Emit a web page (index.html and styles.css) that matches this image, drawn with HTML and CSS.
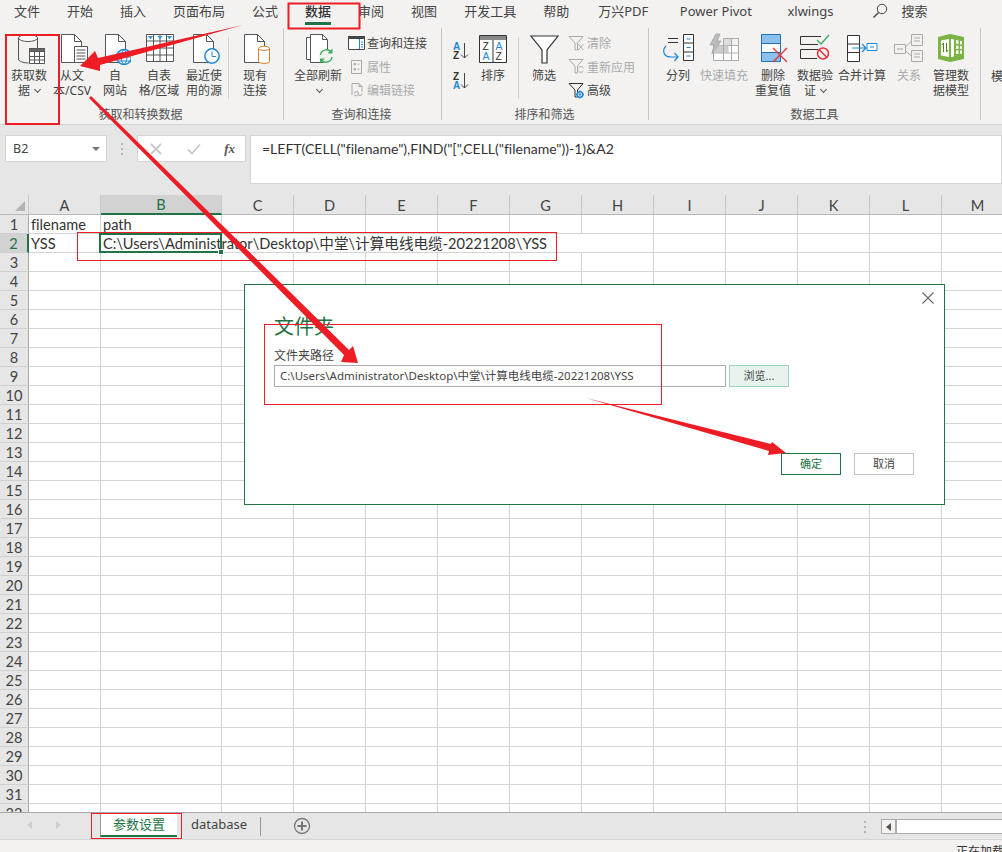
FILE: index.html
```html
<!DOCTYPE html>
<html lang="zh-CN">

<head>
  <meta charset="UTF-8">
  <title>Excel 文件夹</title>
  <link rel="stylesheet" href="styles.css">
</head>

<body>
  <nav class="tabs">
    <span>文件</span><span>开始</span><span>插入</span><span>页面布局</span><span>公式</span>
    <span class="tab-on">数据</span><span>审阅</span><span>视图</span><span>开发工具</span><span>帮助</span><span class="tab-wx">万兴PDF</span>
    <span class="tab-pp">Power Pivot</span><span class="tab-xl">xlwings</span>
    <span class="tab-search">
      <svg width="16" height="16" viewBox="0 0 16 16" fill="none" stroke="#444"><circle cx="10" cy="6" r="4.7"/><path d="M6.6 9.4 1.5 14.5" stroke-width="1.4"/></svg>
      搜索
    </span>
  </nav>

  <section class="ribbon">
    <div class="group g1">
      <div class="group-body">
        <div class="big w46">
          <svg width="32" height="32" viewBox="0 0 32 32" fill="none" stroke="#555"><ellipse cx="15" cy="5" rx="9.5" ry="3.5" fill="#fff"/><path d="M5.5 5v22c2 2 6 3 10 3M24.5 5v10"/><path fill="#fff" d="M16.5 15.5h15v15h-15z"/><path fill="#666" d="M16.5 15.5h15v3h-15z"/><path d="M21.5 18v12M26.5 18v12M17 23.5h14M17 27h14"/></svg>
          <span>获取数<br>据 <i class="chev"></i></span>
        </div>
        <div class="big w40">
          <svg width="32" height="32" viewBox="0 0 32 32" fill="none" stroke="#555"><path fill="#fff" d="M5.5 1.5h13l7 7v21h-20z"/><path d="M18.5 1.5v7h7"/><path fill="#fff" d="M18.5 13.5h13v16h-13z"/><path d="M20.5 17h9M20.5 20h9M20.5 23h9M20.5 26h9"/></svg>
          <span>从文<br>本/CSV</span>
        </div>
        <div class="big w46">
          <svg width="32" height="32" viewBox="0 0 32 32" fill="none" stroke="#555"><path fill="#fff" d="M6.5 1.5h13l7 7v21h-20z"/><path d="M19.5 1.5v7h7"/><circle cx="25" cy="24" r="7.5" fill="#fff" stroke="#1f87d6" stroke-width="1.5"/><path d="M17.5 24h15M25 16.5c-4 4-4 11 0 15M25 16.5c4 4 4 11 0 15M19 20h12M19 28h12" stroke="#1f87d6"/></svg>
          <span>自<br>网站</span>
        </div>
        <div class="big w42">
          <svg width="32" height="32" viewBox="0 0 32 32" fill="none" stroke="#555"><path fill="#fff" d="M3.5 1.5h27v27h-27z"/><path d="M3.5 8h27M3.5 15h27M3.5 22h27M10.5 1.5v27M17 1.5v27M23.5 1.5v27"/><path fill="#2f9ae0" stroke="none" d="M5 3h5l-2.5 3.5zM14.5 3h5L17 6.5zM24 3h5l-2.5 3.5z"/></svg>
          <span>自表<br>格/区域</span>
        </div>
        <div class="big w48">
          <svg width="32" height="32" viewBox="0 0 32 32" fill="none" stroke="#555"><path fill="#fff" d="M5.5 1.5h13l7 7v21h-20z"/><path d="M18.5 1.5v7h7"/><circle cx="24" cy="23" r="7.2" fill="#fff" stroke="#1f87d6" stroke-width="1.5"/><path d="M24 18.5V23.5H28" stroke="#1f87d6"/></svg>
          <span>最近使<br>用的源</span>
        </div>
        <i class="vsep"></i>
        <div class="big w50">
          <svg width="32" height="32" viewBox="0 0 32 32" fill="none" stroke="#555"><path fill="#fff" d="M5.5 1.5h13l7 7v21h-20z"/><path d="M18.5 1.5v7h7"/><path fill="#fff" stroke="#d9802e" d="M19.5 15.5c0-3 11-3 11 0v13c0 2.5-11 2.5-11 0z"/><path stroke="#d9802e" d="M19.5 15.5c0 2.5 11 2.5 11 0"/></svg>
          <span>现有<br>连接</span>
        </div>
      </div>
      <label>获取和转换数据</label>
    </div>

    <div class="group g2">
      <div class="group-body">
        <div class="big w48">
          <svg width="32" height="32" viewBox="0 0 32 32" fill="none" stroke="#555"><path fill="#fff" d="M4.5 4.5h11v22h-11z"/><path fill="#fff" d="M8.5 1.5h12l5 5v23h-17z"/><path d="M20.5 1.5v5h5"/><circle cx="24" cy="23" r="7" fill="#f3f2f1" stroke="none"/><path d="M18.5 22a6 6 0 0 1 10.5-3M30 24a6 6 0 0 1-10.5 3" stroke="#3dae5e" stroke-width="1.5"/><path fill="#3dae5e" stroke="none" d="M30.5 15.5v5h-5zM18 30.5v-5h5z"/></svg>
          <span>全部刷新<br><i class="chev"></i></span>
        </div>
        <div class="smalls">
          <div class="small">
            <svg width="17" height="14" viewBox="0 0 17 14" fill="none" stroke="#444"><path fill="#fff" d="M.5.5h16v13H.5z"/><path fill="#444" d="M.5.5h16v2H.5z"/><path fill="#cfe4f5" stroke="#1f87d6" d="M11.5 3v10"/><path stroke="#1f87d6" d="M13 6h2M13 8.5h2M13 11h2"/></svg>
            查询和连接
          </div>
          <div class="small off">
            <svg width="17" height="16" viewBox="0 0 17 16" fill="none" stroke="#aaa"><path d="M3.5 1.5h10v13h-10z"/><path d="M6 4.5h1.5V6H6zM6 9.5h1.5V11H6zM9.5 5.2h2M9.5 10.2h2"/></svg>
            属性
          </div>
          <div class="small off">
            <svg width="17" height="16" viewBox="0 0 17 16" fill="none" stroke="#aaa"><path d="M4 13V1.5h7l3 3v5M11 1.5v3h3"/><path d="M6.5 11.5a2 2 0 0 1 4 0c0 2-3 3-4.5 1.5M14 11.5a2 2 0 0 1-4 0"/></svg>
            编辑链接
          </div>
        </div>
      </div>
      <label>查询和连接</label>
    </div>

    <div class="group g3">
      <div class="group-body">
        <div class="sort-pair">
          <svg width="22" height="22" viewBox="0 0 22 22" fill="none" stroke="#444"><text x="2" y="9" class="az blue">A</text><text x="2" y="18" class="az dark">Z</text><path d="M13.5 2v15M10 13.5l3.5 3.5 3.5-3.5"/></svg>
          <svg width="22" height="22" viewBox="0 0 22 22" fill="none" stroke="#444"><text x="2" y="9" class="az dark">Z</text><text x="2" y="18" class="az blue">A</text><path d="M13.5 2v15M10 13.5l3.5 3.5 3.5-3.5"/></svg>
        </div>
        <div class="big w44 sort-big">
          <svg width="32" height="32" viewBox="0 0 32 32" fill="none" stroke="#333"><path fill="#fff" d="M2.5 2.5h27v27h-27z"/><path fill="#888" stroke="none" d="M3 3h26v4H3z"/><path d="M16 7v22"/><text x="5.5" y="17" class="azb dark">Z</text><text x="5.5" y="27" class="azb blue">A</text><text x="18.5" y="17" class="azb blue">A</text><text x="18.5" y="27" class="azb dark">Z</text></svg>
          <span>排序</span>
        </div>
        <i class="vsep vsep-sort"></i>
        <div class="big w44">
          <svg width="32" height="32" viewBox="0 0 32 32" fill="none" stroke="#333" stroke-width="1.2"><path fill="#fff" d="M3 3h27L19 17v13h-5V17z"/></svg>
          <span>筛选</span>
        </div>
        <div class="smalls smalls-filter">
          <div class="small off">
            <svg width="17" height="17" viewBox="0 0 17 17" fill="none" stroke="#aaa"><path d="M1 1.5h14L9.5 8v7H7V8z"/><path d="M10 9l5.5 6M15.5 9 10 15"/></svg>
            清除
          </div>
          <div class="small off">
            <svg width="17" height="17" viewBox="0 0 17 17" fill="none" stroke="#aaa"><path d="M1 1.5h14L9.5 8v7H7V8z"/><path d="M10.5 10a3 3 0 0 1 5 0M15.5 13a3 3 0 0 1-5 0"/></svg>
            重新应用
          </div>
          <div class="small">
            <svg width="17" height="17" viewBox="0 0 17 17" fill="none" stroke="#333"><path d="M1 1.5h14L9.5 8v7H7V8z"/><circle cx="12" cy="12.5" r="2.8" stroke="#1f87d6" stroke-width="1.5"/><circle cx="12" cy="12.5" r=".8" fill="#1f87d6" stroke="#1f87d6"/><path d="M12 8.5v1.2M12 15.3v1.2M8 12.5h1.2M14.8 12.5H16" stroke="#1f87d6" stroke-width="1.3"/></svg>
            高级
          </div>
        </div>
      </div>
      <label>排序和筛选</label>
    </div>

    <div class="group g4">
      <div class="group-body">
        <div class="big w38">
          <svg width="32" height="30" viewBox="0 0 32 30" fill="none" stroke="#333"><path d="M6 5.5h10M6 9.5h10"/><path fill="#fff" d="M21.5 1.5h10v26h-10z"/><path d="M21.5 10h10M21.5 19h10"/><path d="M24.5 6h4M24.5 14.5h4M24.5 23h4" stroke="#1f87d6"/><path d="M4 13c-4 4-3 11 5 11h7M12.5 20l3.5 4-3.5 4" stroke="#1f87d6" stroke-width="1.2"/></svg>
          <span>分列</span>
        </div>
        <div class="big w54 off">
          <svg width="32" height="30" viewBox="0 0 32 30" fill="none" stroke="#aaa"><path fill="#fff" d="M5.5 12.5h25v15h-25z"/><path fill="#ddd" d="M15.5 5.5h8v7h-8z"/><path fill="#ccc" stroke="none" d="M5.5 12.5h15v7h-15z"/><path d="M5.5 20h25M15.5 12.5v15M23.5 5.5v22M23.5 5.5h7v7"/><path fill="#bbb" d="M8 1l-6 11h4l-2 9 9-13H9l3-7z"/></svg>
          <span>快速填充</span>
        </div>
        <div class="big w44">
          <svg width="32" height="30" viewBox="0 0 32 30" fill="none" stroke="#1f6fb5"><path fill="#8bc1ec" d="M4.5 1.5h19v9h-19z"/><path fill="#fff" d="M4.5 10.5h19v9h-19z"/><path fill="#8bc1ec" d="M4.5 19.5h19v9h-19z"/><path stroke="#e8313a" stroke-width="1.4" d="M16 15l14 14M30 15 16 29"/></svg>
          <span>删除<br>重复值</span>
        </div>
        <div class="big w40">
          <svg width="32" height="30" viewBox="0 0 32 30" fill="none" stroke="#333"><path d="M22 3.5H1.5v8H19M19 16.5H1.5v9H18"/><path stroke="#3dae5e" stroke-width="1.3" d="M18 7l4 4 8-9"/><circle cx="24" cy="20.5" r="5.5" stroke="#e8313a" stroke-width="1.5"/><path stroke="#e8313a" stroke-width="1.5" d="M20 16.5l8 8"/></svg>
          <span>数据验<br>证 <i class="chev"></i></span>
        </div>
        <div class="big w54">
          <svg width="32" height="30" viewBox="0 0 32 30" fill="none" stroke="#333"><path fill="#fff" d="M1.5 2.5h12v26h-12z"/><path d="M1.5 11h12M1.5 19.5h12"/><path stroke="#1f87d6" stroke-width="1.2" d="M6 15h14M16 11l4 4-4 4"/><path stroke="#1f87d6" fill="#fff" d="M21 10.5h10v7H21z"/><path stroke="#1f87d6" d="M24 14h4"/></svg>
          <span>合并计算</span>
        </div>
        <div class="big w40 off">
          <svg width="32" height="30" viewBox="0 0 32 30" fill="none" stroke="#aaa"><path d="M1.5 11.5h11v9h-11zM18.5 1.5h11v11h-11zM18.5 17.5h11v11h-11z"/><path d="M12.5 14l6-6M12.5 18l6 5M4 16h6M21 5h6M21 8h6M21 21h6M21 24h6"/></svg>
          <span>关系</span>
        </div>
        <div class="big w44">
          <svg width="32" height="30" viewBox="0 0 32 30"><path fill="#7cb342" d="M3 4 15 1l14 3v22l-14 3-12-3z"/><path fill="#fff" d="M6 7.5 14 6v18l-8-1.5zM16 6l3 .5v17l-3 .5zM21 7l2.5.5V11l-2.5-.2zM25 7.8l2 .4v3.2l-2-.2zM21 12.5l2.5.2V16H21zM25 13l2 .2V16h-2zM21 17.5h2.5v3.3l-2.5.2zM25 17.5h2v3l-2 .3z"/><path fill="none" stroke="#4d8a1f" d="M8.5 19v-9L7 12M11.5 10v9l1.5-2"/></svg>
          <span>管理数<br>据模型</span>
        </div>
      </div>
      <label>数据工具</label>
    </div>

    <div class="group g5">
      <div class="next">模拟分析</div>
    </div>
  </section>

  <section class="formula">
    <div class="namebox">B2<i class="down"></i></div>
    <i class="grip"></i>
    <div class="fx-btns">
      <svg width="16" height="14" viewBox="0 0 16 14" fill="none" stroke="#c8c8c8" stroke-width="1.8"><path d="M3 2l10 10M13 2 3 12"/></svg>
      <svg width="16" height="14" viewBox="0 0 16 14" fill="none" stroke="#c8c8c8" stroke-width="1.8"><path d="M2 7.5l4 4 8-9"/></svg>
      <em>fx</em>
    </div>
    <div class="fx-input">=LEFT(CELL("filename"),FIND("[",CELL("filename"))-1)&amp;A2</div>
  </section>

  <main class="sheet">
    <table>
      <colgroup><col class="c-rh"><col class="c-a"><col class="c-b"><col span="11" class="c-n"></colgroup>
      <thead>
        <tr><th class="corner"><i></i></th><th>A</th><th class="cur-col">B</th><th>C</th><th>D</th><th>E</th><th>F</th><th>G</th><th>H</th><th>I</th><th>J</th><th>K</th><th>L</th><th>M</th></tr>
      </thead>
      <tbody>
        <tr><th>1</th><td>filename</td><td>path</td><td></td><td></td><td></td><td></td><td></td><td></td><td></td><td></td><td></td><td></td><td></td></tr>
        <tr><th class="cur-row">2</th><td>YSS</td><td colspan="6" class="long"><b class="sel"><i></i></b>C:\Users\Administrator\Desktop\中堂\计算电线电缆-20221208\YSS</td><td></td><td></td><td></td><td></td><td></td><td></td></tr>
        <tr><th>3</th><td></td><td></td><td></td><td></td><td></td><td></td><td></td><td></td><td></td><td></td><td></td><td></td><td></td></tr>
        <tr><th>4</th><td></td><td></td><td></td><td></td><td></td><td></td><td></td><td></td><td></td><td></td><td></td><td></td><td></td></tr>
        <tr><th>5</th><td></td><td></td><td></td><td></td><td></td><td></td><td></td><td></td><td></td><td></td><td></td><td></td><td></td></tr>
        <tr><th>6</th><td></td><td></td><td></td><td></td><td></td><td></td><td></td><td></td><td></td><td></td><td></td><td></td><td></td></tr>
        <tr><th>7</th><td></td><td></td><td></td><td></td><td></td><td></td><td></td><td></td><td></td><td></td><td></td><td></td><td></td></tr>
        <tr><th>8</th><td></td><td></td><td></td><td></td><td></td><td></td><td></td><td></td><td></td><td></td><td></td><td></td><td></td></tr>
        <tr><th>9</th><td></td><td></td><td></td><td></td><td></td><td></td><td></td><td></td><td></td><td></td><td></td><td></td><td></td></tr>
        <tr><th>10</th><td></td><td></td><td></td><td></td><td></td><td></td><td></td><td></td><td></td><td></td><td></td><td></td><td></td></tr>
        <tr><th>11</th><td></td><td></td><td></td><td></td><td></td><td></td><td></td><td></td><td></td><td></td><td></td><td></td><td></td></tr>
        <tr><th>12</th><td></td><td></td><td></td><td></td><td></td><td></td><td></td><td></td><td></td><td></td><td></td><td></td><td></td></tr>
        <tr><th>13</th><td></td><td></td><td></td><td></td><td></td><td></td><td></td><td></td><td></td><td></td><td></td><td></td><td></td></tr>
        <tr><th>14</th><td></td><td></td><td></td><td></td><td></td><td></td><td></td><td></td><td></td><td></td><td></td><td></td><td></td></tr>
        <tr><th>15</th><td></td><td></td><td></td><td></td><td></td><td></td><td></td><td></td><td></td><td></td><td></td><td></td><td></td></tr>
        <tr><th>16</th><td></td><td></td><td></td><td></td><td></td><td></td><td></td><td></td><td></td><td></td><td></td><td></td><td></td></tr>
        <tr><th>17</th><td></td><td></td><td></td><td></td><td></td><td></td><td></td><td></td><td></td><td></td><td></td><td></td><td></td></tr>
        <tr><th>18</th><td></td><td></td><td></td><td></td><td></td><td></td><td></td><td></td><td></td><td></td><td></td><td></td><td></td></tr>
        <tr><th>19</th><td></td><td></td><td></td><td></td><td></td><td></td><td></td><td></td><td></td><td></td><td></td><td></td><td></td></tr>
        <tr><th>20</th><td></td><td></td><td></td><td></td><td></td><td></td><td></td><td></td><td></td><td></td><td></td><td></td><td></td></tr>
        <tr><th>21</th><td></td><td></td><td></td><td></td><td></td><td></td><td></td><td></td><td></td><td></td><td></td><td></td><td></td></tr>
        <tr><th>22</th><td></td><td></td><td></td><td></td><td></td><td></td><td></td><td></td><td></td><td></td><td></td><td></td><td></td></tr>
        <tr><th>23</th><td></td><td></td><td></td><td></td><td></td><td></td><td></td><td></td><td></td><td></td><td></td><td></td><td></td></tr>
        <tr><th>24</th><td></td><td></td><td></td><td></td><td></td><td></td><td></td><td></td><td></td><td></td><td></td><td></td><td></td></tr>
        <tr><th>25</th><td></td><td></td><td></td><td></td><td></td><td></td><td></td><td></td><td></td><td></td><td></td><td></td><td></td></tr>
        <tr><th>26</th><td></td><td></td><td></td><td></td><td></td><td></td><td></td><td></td><td></td><td></td><td></td><td></td><td></td></tr>
        <tr><th>27</th><td></td><td></td><td></td><td></td><td></td><td></td><td></td><td></td><td></td><td></td><td></td><td></td><td></td></tr>
        <tr><th>28</th><td></td><td></td><td></td><td></td><td></td><td></td><td></td><td></td><td></td><td></td><td></td><td></td><td></td></tr>
        <tr><th>29</th><td></td><td></td><td></td><td></td><td></td><td></td><td></td><td></td><td></td><td></td><td></td><td></td><td></td></tr>
        <tr><th>30</th><td></td><td></td><td></td><td></td><td></td><td></td><td></td><td></td><td></td><td></td><td></td><td></td><td></td></tr>
        <tr><th>31</th><td></td><td></td><td></td><td></td><td></td><td></td><td></td><td></td><td></td><td></td><td></td><td></td><td></td></tr>
        <tr><th>32</th><td></td><td></td><td></td><td></td><td></td><td></td><td></td><td></td><td></td><td></td><td></td><td></td><td></td></tr>
      </tbody>
    </table>
  </main>

  <footer class="sheetbar">
    <i class="nav nav-l"></i>
    <i class="nav nav-r"></i>
    <div class="sheet-tab">参数设置</div>
    <div class="sheet-other">database</div>
    <i class="tab-sep"></i>
    <svg class="add" width="18" height="18" viewBox="0 0 18 18" fill="none" stroke="#777"><circle cx="9" cy="9" r="7.5" stroke-width="1.3"/><path d="M9 4.5v9M4.5 9h9" stroke-width="2"/></svg>
    <i class="grip grip-h"></i>
    <div class="hscroll"><span><i></i></span></div>
  </footer>

  <div class="status">
    <svg width="15" height="12" viewBox="0 0 15 12" fill="none" stroke="#555"><path d="M.5 12V.5h14V12M.5 3.5h14M3 6.5h9M3 9h9"/></svg>
    <span class="status-msg">正在加载</span>
  </div>

  <div class="dialog">
    <svg class="close" width="12" height="12" viewBox="0 0 12 12" fill="none" stroke="#666" stroke-width="1.1"><path d="M.5.5l11 11M11.5.5l-11 11"/></svg>
    <h2>文件夹</h2>
    <p>文件夹路径</p>
    <div class="path-row">
      <div class="path-input">C:\Users\Administrator\Desktop\中堂\计算电线电缆-20221208\YSS</div>
      <div class="browse">浏览...</div>
    </div>
    <div class="actions">
      <div class="btn btn-ok">确定</div>
      <div class="btn">取消</div>
    </div>
  </div>

  <!-- red marks drawn on top of the screenshot -->
  <svg class="marks" width="1002" height="852" viewBox="0 0 1002 852" fill="none" stroke="#ee1c25">
    <rect x="6" y="35" width="53" height="89" stroke-width="2"/>
    <rect x="288.5" y="3.5" width="71" height="25" stroke-width="2"/>
    <rect x="77.5" y="232.5" width="479" height="28"/>
    <rect x="264.5" y="324.5" width="397" height="80"/>
    <rect x="91.5" y="813.5" width="90" height="25"/>
    <g fill="#ee1c25" stroke="none">
      <polygon points="243,25 98,58 95,51 80,66 100,71 100,65"/>
      <polygon points="89,98 91,96 349,350 353,346 358,363 341,362 344,355"/>
      <polygon points="586,398 771,444 772,442 786,453 768,455 769,451"/>
    </g>
  </svg>
</body>

</html>
```

FILE: styles.css
```css
* {
  box-sizing: border-box;
}

html, body {
  margin: 0;
  width: 1002px;
  height: 852px;
  overflow: hidden;
}

body {
  position: relative;
  font-family: "Noto Sans", "Noto Sans CJK SC", sans-serif;
  font-size: 12px;
  color: #444;
  background: #e6e6e6;
}

i, em {
  font-style: normal;
}

svg {
  display: block;
}

/* tab row */
.tabs {
  display: flex;
  gap: 27px;
  height: 28px;
  padding: 0 0 0 14px;
  font-size: 13px;
  line-height: 22px;
  background: #f3f2f1;
  white-space: nowrap;
}

.tab-on {
  position: relative;
  font-weight: 500;
  color: #333;
}

.tab-on::after {
  content: "";
  position: absolute;
  left: 0;
  right: 0;
  top: 22px;
  height: 3px;
  background: #217346;
}

.tab-wx {
  margin-left: 2px;
}

.tab-pp {
  margin-left: 4.5px;
}

.tab-xl {
  margin-left: 8.5px;
}

.tab-search {
  display: flex;
  align-items: center;
  gap: 13px;
  height: 22px;
  margin-left: 12px;
}

/* ribbon */
.ribbon {
  display: flex;
  height: 97px;
  background: #f3f2f1;
  border-bottom: 1px solid #d4d4d4;
  overflow: hidden;
}

.group {
  display: flex;
  flex-direction: column;
  flex: none;
  height: 92px;
  border-right: 1px solid #c8c6c4;
}

.group-body {
  display: flex;
  flex: none;
  height: 80px;
  padding-top: 5px;
}

.group label {
  text-align: center;
  line-height: 14px;
  color: #555;
}

.g1 {
  width: 284px;
  padding-left: 6px;
}

.g1 label {
  margin-left: -8px;
}

.g2 {
  width: 158px;
  padding-left: 10px;
}

.g2 label {
  margin-left: -12px;
}

.g3 {
  width: 207px;
  padding-left: 9px;
}

.g3 label {
  margin-left: -10px;
}

.g4 {
  width: 332px;
  padding-left: 10px;
}

.g4 label {
  margin-left: -10px;
}

.g5 {
  border-right: 0;
  padding-left: 10px;
}

.big {
  display: flex;
  flex-direction: column;
  align-items: center;
  flex-shrink: 0;
  line-height: 15px;
  text-align: center;
  white-space: nowrap;
}

.big span {
  display: block;
  margin-top: 3px;
  color: #444;
}

.g4 .big svg {
  margin-bottom: 2px;
}

.w38 { width: 38px; }
.w40 { width: 40px; }
.w42 { width: 42px; }
.w44 { width: 44px; }
.w46 { width: 46px; }
.w48 { width: 48px; }
.w50 { width: 50px; }
.w54 { width: 54px; }

.big.off span,
.small.off {
  color: #aaa;
}

.chev {
  display: inline-block;
  width: 5px;
  height: 5px;
  margin: 0 0 3px 2px;
  border-right: 1px solid #555;
  border-bottom: 1px solid #555;
  transform: rotate(45deg);
}

.vsep {
  width: 1px;
  height: 62px;
  margin: 4px 1px 0 0;
  background: #d2d0ce;
}

.vsep-sort {
  margin: 4px 3px 0 3px;
}

.smalls {
  display: flex;
  flex-direction: column;
  gap: 5.5px;
  margin-left: 6px;
  padding-top: 1px;
}

.smalls-filter {
  margin-left: 2px;
}

.small {
  display: flex;
  align-items: center;
  gap: 2px;
  height: 18px;
  white-space: nowrap;
}

.sort-pair {
  display: flex;
  flex-direction: column;
  gap: 8px;
  padding-top: 8px;
}

.sort-big {
  margin-left: -2px;
}

.az {
  font: bold 10px "Liberation Sans", sans-serif;
  stroke: none;
}

.azb {
  font: 10.5px "Liberation Sans", sans-serif;
  stroke: none;
}

.blue {
  fill: #1f87d6;
}

.dark {
  fill: #333;
}

.next {
  padding-top: 39px;
  white-space: nowrap;
}

/* formula bar */
.formula {
  display: flex;
  height: 70px;
  padding: 10px 0 0 5px;
}

.namebox {
  display: flex;
  align-items: center;
  justify-content: space-between;
  width: 102px;
  height: 27px;
  padding: 0 6px 0 7px;
  font-size: 12.5px;
  background: #fff;
  border: 1px solid #d4d4d4;
}

.down {
  border-left: 4px solid transparent;
  border-right: 4px solid transparent;
  border-top: 4px solid #777;
}

.grip {
  width: 2px;
  height: 12px;
  margin: 8px 14px 0 14px;
  background: repeating-linear-gradient(#b5b5b5 0 2px, transparent 2px 5px);
}

.fx-btns {
  display: flex;
  align-items: center;
  justify-content: space-between;
  width: 109px;
  height: 27px;
  padding: 0 10px;
  background: #fff;
  border: 1px solid #d4d4d4;
}

.fx-btns em {
  font: italic bold 13px "Liberation Serif", serif;
  color: #555;
}

.fx-input {
  flex: 1;
  height: 49px;
  margin-left: 4px;
  padding: 5px 11px;
  font: 14px/16px Lato, sans-serif;
  font-variant-ligatures: none;
  color: #333;
  background: #fff;
  border: 1px solid #d4d4d4;
  white-space: nowrap;
  overflow: hidden;
}

/* grid */
.sheet {
  height: 617px;
  background: #fff;
  overflow: hidden;
}

table {
  width: 1014px;
  table-layout: fixed;
  border-collapse: separate;
  border-spacing: 0;
  font: 14.6px/17px Lato, "Noto Sans CJK SC", sans-serif;
  font-variant-ligatures: none;
}

.c-rh { width: 29px; }
.c-a { width: 72px; }
.c-b { width: 121px; }
.c-n { width: 72px; }

th {
  height: 19px;
  padding: 1px 0 0;
  font-weight: normal;
  text-align: center;
  color: #444;
  background: #e6e6e6;
  border-right: 1px solid #b8b8b8;
  border-bottom: 1px solid #b8b8b8;
}

thead th {
  border-right-color: #c8c8c8;
}

tbody th {
  border-bottom-color: #d0d0d0;
  border-right-color: #a8a8a8;
}

td {
  height: 19px;
  padding: 1px 2px 0;
  vertical-align: bottom;
  color: #333;
  border-right: 1px solid #d4d4d4;
  border-bottom: 1px solid #d4d4d4;
  white-space: nowrap;
}

.corner {
  position: relative;
}

.corner i {
  position: absolute;
  right: 3px;
  bottom: 3px;
  border-left: 10px solid transparent;
  border-bottom: 10px solid #b4b4b4;
}

.cur-col {
  color: #217346;
  background: #d2d2d2;
  border-bottom: 2px solid #217346;
}

.cur-row {
  color: #217346;
  background: #d2d2d2;
  border-right: 2px solid #217346;
}

.long {
  position: relative;
  border-right-color: transparent;
}

.sel {
  position: absolute;
  left: -2px;
  top: -1px;
  width: 123px;
  height: 20px;
  border: 2px solid #217346;
}

.sel i {
  position: absolute;
  right: -4px;
  bottom: -4px;
  width: 6px;
  height: 6px;
  background: #217346;
  border: 1px solid #fff;
}

/* sheet tabs */
.sheetbar {
  display: flex;
  align-items: flex-start;
  height: 28px;
  border-top: 1px solid #a8a8a8;
  border-bottom: 1px solid #d4d4d4;
  background: #e6e6e6;
  white-space: nowrap;
}

.nav {
  margin-top: 8px;
  border-top: 4px solid transparent;
  border-bottom: 4px solid transparent;
}

.nav-l {
  margin-left: 27px;
  border-right: 5px solid #cfcfcf;
}

.nav-r {
  margin-left: 24px;
  border-left: 5px solid #cfcfcf;
}

.sheet-tab {
  width: 77px;
  height: 24px;
  margin-left: 39px;
  font-size: 13px;
  line-height: 22px;
  text-align: center;
  color: #217346;
  background: #fff;
  border-left: 1px solid #999;
  border-bottom: 2px solid #217346;
}

.sheet-other {
  margin-left: 14px;
  font-size: 13px;
  line-height: 22px;
  color: #444;
}

.tab-sep {
  width: 1px;
  height: 19px;
  margin: 4px 0 0 13px;
  background: #999;
}

.add {
  margin: 4px 0 0 32px;
}

.grip-h {
  margin: 8px 0 0 553px;
}

.hscroll {
  flex: 1;
  height: 15px;
  margin: 6px 0 0 15px;
  background: #fff;
  border: 1px solid #ababab;
  border-right: 0;
}

.hscroll span {
  display: flex;
  align-items: center;
  justify-content: center;
  width: 15px;
  height: 13px;
  background: #f3f2f1;
  border-right: 2px solid #ababab;
}

.hscroll i {
  border-top: 4px solid transparent;
  border-bottom: 4px solid transparent;
  border-right: 5px solid #555;
}

/* status bar */
.status {
  display: flex;
  align-items: flex-start;
  height: 12px;
  padding: 5px 0 0 8px;
  background: #f3f2f1;
  overflow: hidden;
}

.status-msg {
  margin-left: 948px;
  line-height: 14px;
  color: #333;
  white-space: nowrap;
}

/* folder dialog */
.dialog {
  position: absolute;
  left: 244px;
  top: 284px;
  display: flex;
  flex-direction: column;
  width: 701px;
  height: 221px;
  padding: 28px 30px 29px 29px;
  background: #fff;
  border: 1px solid #217346;
}

.close {
  position: absolute;
  right: 10px;
  top: 7px;
}

.dialog h2 {
  margin: 0;
  font-size: 20px;
  font-weight: normal;
  line-height: 28px;
  color: #217346;
}

.dialog p {
  margin: 7px 0 1px;
  line-height: 16px;
  color: #444;
}

.path-row {
  display: flex;
  gap: 3px;
}

.path-input {
  width: 452px;
  height: 22px;
  padding-left: 5px;
  font: 11.5px/20px "Noto Sans", "Noto Sans CJK SC", sans-serif;
  color: #444;
  border: 1px solid #ababab;
  white-space: nowrap;
}

.browse {
  width: 60px;
  height: 22px;
  font-size: 11px;
  line-height: 20px;
  text-align: center;
  background: #e8f3ee;
  border: 1px solid #a0d5b8;
}

.actions {
  display: flex;
  justify-content: flex-end;
  gap: 13px;
  margin-top: auto;
}

.btn {
  width: 60px;
  height: 22px;
  font-size: 11px;
  line-height: 20px;
  text-align: center;
  border: 1px solid #c0c0c0;
}

.btn-ok {
  color: #217346;
  border-color: #217346;
}

/* annotations */
.marks {
  position: absolute;
  left: 0;
  top: 0;
  pointer-events: none;
}
```
